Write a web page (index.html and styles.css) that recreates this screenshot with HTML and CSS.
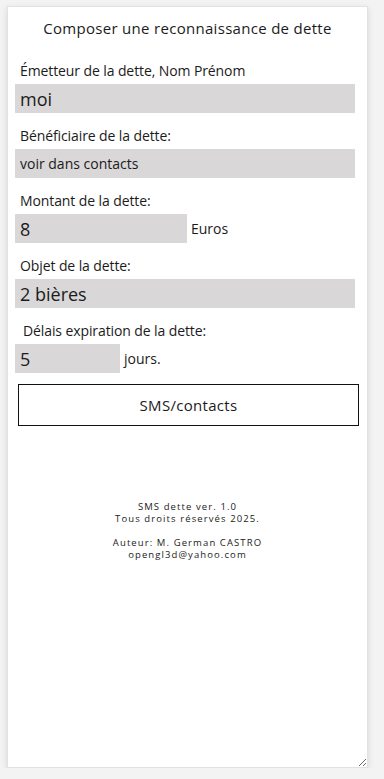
FILE: index.html
```html
<!DOCTYPE html>
<html lang="fr">
<head>
  <meta charset="UTF-8" />
  <meta name="viewport" content="width=device-width, initial-scale=1.0"/>
  <title>SMS dette</title>
  <link rel="stylesheet" href="styles.css">
</head>
<body>

  <div class="panneau">
    <h1 class="titre">Composer une reconnaissance de dette</h1>

    <div class="champ">
      <label for="emetteur">Émetteur de la dette, Nom Prénom</label>
      <input id="emetteur" class="saisie grand" type="text" value="moi">
    </div>

    <div class="champ">
      <label for="beneficiaire">Bénéficiaire de la dette:</label>
      <input id="beneficiaire" class="saisie" type="text" value="voir dans contacts">
    </div>

    <div class="champ">
      <label for="montant">Montant de la dette:</label>
      <div class="ligne">
        <input id="montant" class="saisie grand court" type="text" value="8">
        <span>Euros</span>
      </div>
    </div>

    <div class="champ">
      <label for="objet">Objet de la dette:</label>
      <input id="objet" class="saisie grand" type="text" value="2 bières">
    </div>

    <div class="champ">
      <label for="delais" class="decale">Délais expiration de la dette:</label>
      <div class="ligne">
        <input id="delais" class="saisie grand tres-court" type="text" value="5">
        <span>jours.</span>
      </div>
    </div>

    <button class="bouton">SMS/contacts</button>

    <div class="credits">
      <p>SMS dette ver. 1.0<br>Tous droits réservés 2025.</p>
      <p>Auteur: M. German CASTRO<br>opengl3d@yahoo.com</p>
    </div>
  </div>

</body>
</html>
```

FILE: styles.css
```css
body {
  font-family: "Open Sans", Arial, sans-serif;
  background-color: #f3f3f3;
  margin: 0;
  padding: 6px 0 0 7px;
  color: #1b1b1b;
}

.panneau {
  box-sizing: border-box;
  width: 361px;
  height: 762px;
  background: white;
  border: 1px solid #e2e2e2;
  box-shadow: 0 2px 6px rgba(0, 0, 0, 0.12);
  padding: 0 0 0 7px;
  resize: both;
  overflow: auto;
}

.titre {
  font-size: 15px;
  font-weight: normal;
  letter-spacing: 0.3px;
  line-height: 18px;
  text-align: center;
  margin: 12px 0 0 0;
  padding-right: 7px;
}

.champ {
  margin-top: 25px;
}

.champ + .champ {
  margin-top: 14px;
}

.champ label {
  display: block;
  font-size: 14px;
  line-height: 17px;
  padding-left: 5px;
  margin-bottom: 5px;
  letter-spacing: -0.1px;
}

.champ label.decale {
  padding-left: 8px;
}

.saisie {
  box-sizing: border-box;
  width: 340px;
  height: 29px;
  border: none;
  background: #d9d7d8;
  padding: 0 5px;
  font-family: inherit;
  font-size: 14px;
  color: #1b1b1b;
  outline: none;
}

.saisie.grand {
  font-size: 18px;
}

.saisie.court {
  width: 172px;
}

.saisie.tres-court {
  width: 105px;
}

.ligne {
  display: flex;
  align-items: center;
  gap: 4px;
  font-size: 14px;
}

.bouton {
  display: block;
  box-sizing: border-box;
  width: 341px;
  height: 42px;
  margin: 11px 0 0 3px;
  background: white;
  border: 1px solid #111;
  font-family: inherit;
  font-size: 15px;
  letter-spacing: 0.3px;
  color: #1b1b1b;
}

.credits {
  margin-top: 75px;
  text-align: center;
  font-size: 9.5px;
  line-height: 12px;
  letter-spacing: 1.1px;
  padding-right: 7px;
}

.credits p {
  margin: 0 0 12px 0;
}
```
